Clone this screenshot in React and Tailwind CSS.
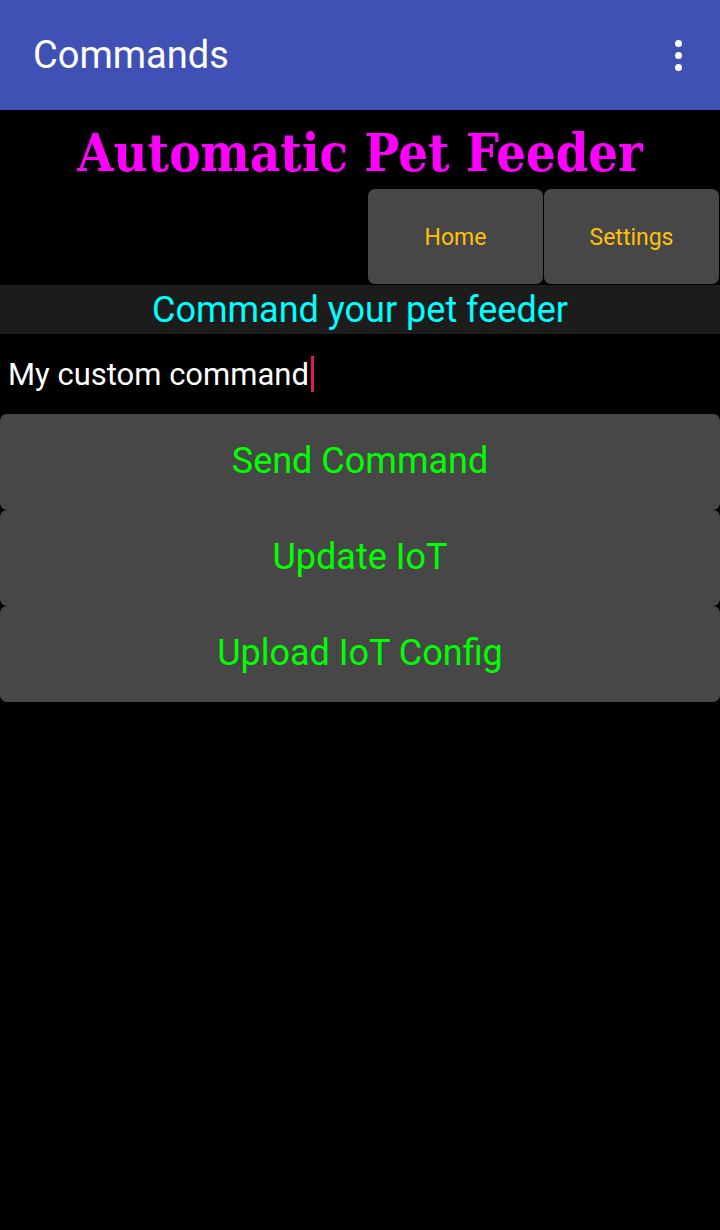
import React from 'react';

const roboto = { fontFamily: 'Roboto, "Liberation Sans", sans-serif' };

const ActionButton = ({ label }) => (
    <button className="w-full h-[96px] bg-[#474747] rounded-[7px] text-[#00ff00] text-[36px] leading-none flex items-center justify-center pb-[2px]">
        {label}
    </button>
);

const App = () => {
    return (
        <div className="w-[720px] h-[1230px] bg-black flex flex-col" style={roboto}>
            <header className="h-[110px] bg-[#3f51b5] flex items-center justify-between pl-[33px] pr-[38px]">
                <h1 className="text-white text-[38px] leading-none">Commands</h1>
                <div className="flex flex-col gap-[5px]">
                    <span className="w-[7px] h-[7px] rounded-full bg-white" />
                    <span className="w-[7px] h-[7px] rounded-full bg-white" />
                    <span className="w-[7px] h-[7px] rounded-full bg-white" />
                </div>
            </header>

            <div className="h-[79px] flex items-center justify-center pt-[6px]">
                <h2
                    className="text-[#ff00ff] text-[52px] font-bold leading-none"
                    style={{ fontFamily: '"DejaVu Serif Condensed", "DejaVu Serif", serif', fontStretch: 'condensed' }}
                >
                    Automatic Pet Feeder
                </h2>
            </div>

            <div className="h-[96px] flex justify-end gap-px pr-px">
                <button className="w-[175px] h-[95px] bg-[#474747] rounded-[7px] text-[#ffc107] text-[23px] pt-[3px]">Home</button>
                <button className="w-[175px] h-[95px] bg-[#474747] rounded-[7px] text-[#ffc107] text-[23px] pt-[3px]">Settings</button>
            </div>

            <div className="h-[49px] bg-[#1c1c1c] flex items-center justify-center">
                <p className="text-[#00ffff] text-[36px] leading-none">Command your pet feeder</p>
            </div>

            <div className="h-[80px] flex items-center pl-[8px]">
                <span className="text-white text-[31px] leading-none">My custom command</span>
                <span className="ml-[2px] w-[3px] h-[36px] bg-[#d81b60]" />
            </div>

            <div className="flex flex-col">
                <ActionButton label="Send Command" />
                <ActionButton label="Update IoT" />
                <ActionButton label="Upload IoT Config" />
            </div>
        </div>
    );
};

export default App;
